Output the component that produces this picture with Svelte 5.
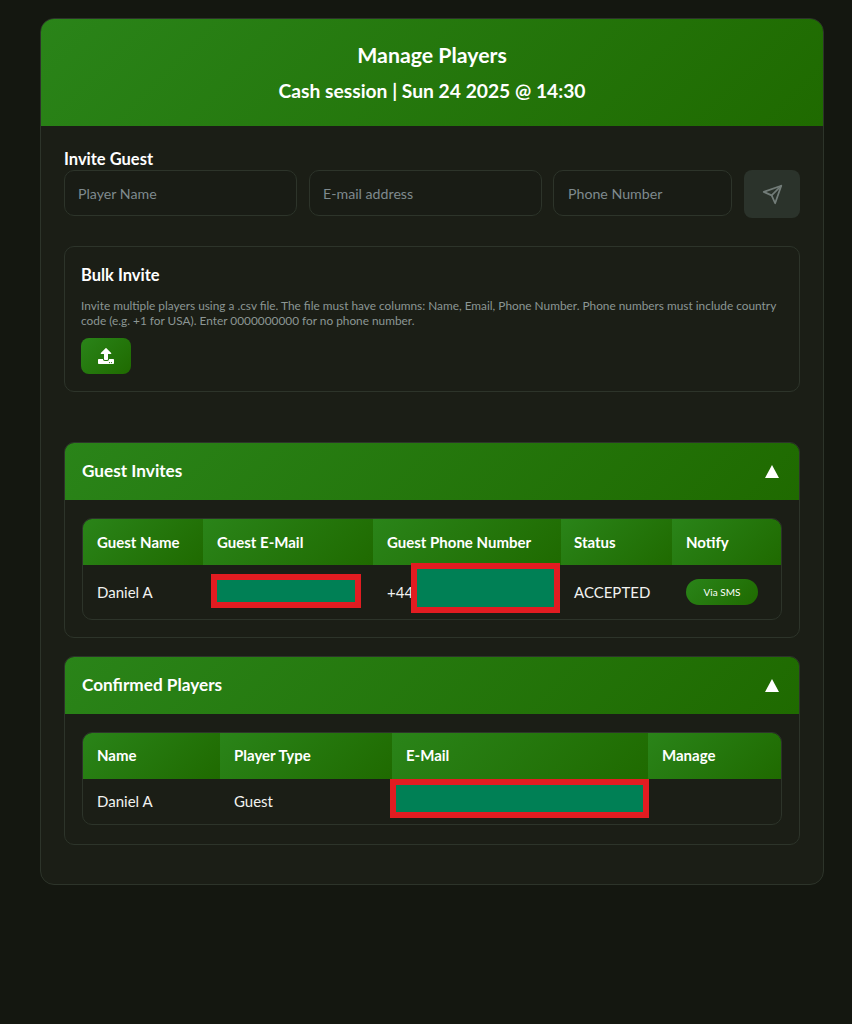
<script>
  const invites = [{ name: 'Daniel A', phone: '+44', status: 'ACCEPTED' }];
  const players = [{ name: 'Daniel A', type: 'Guest' }];
</script>

<div class="page">
  <main class="card">
    <header class="card-head">
      <h1>Manage Players</h1>
      <h2>Cash session | Sun 24 2025 @ 14:30</h2>
    </header>

    <div class="card-body">
      <section class="invite">
        <h3>Invite Guest</h3>
        <div class="invite-row">
          <input class="name" placeholder="Player Name" />
          <input class="email" placeholder="E-mail address" />
          <input class="phone" placeholder="Phone Number" />
          <button class="send" aria-label="Send invite">
            <svg viewBox="0 0 24 24" width="21" height="21" fill="none" stroke="currentColor" stroke-width="2" stroke-linecap="round" stroke-linejoin="round">
              <line x1="22" y1="2" x2="11" y2="13" />
              <polygon points="22 2 15 22 11 13 2 9 22 2" />
            </svg>
          </button>
        </div>
      </section>

      <section class="bulk">
        <h4>Bulk Invite</h4>
        <p>Invite multiple players using a .csv file. The file must have columns: Name, Email, Phone Number. Phone numbers must include country code (e.g. +1 for USA). Enter 0000000000 for no phone number.</p>
        <button class="upload" aria-label="Upload file">
          <svg viewBox="0 0 512 512" width="16" height="16" fill="currentColor">
            <path d="M296 384h-80c-13.3 0-24-10.7-24-24V192h-87.7c-17.8 0-26.7-21.5-14.1-34.1L242.3 5.7c7.5-7.5 19.8-7.5 27.3 0l152.2 152.2c12.6 12.6 3.7 34.1-14.1 34.1H320v168c0 13.3-10.7 24-24 24zm216-8v112c0 13.3-10.7 24-24 24H24c-13.3 0-24-10.7-24-24V376c0-13.3 10.7-24 24-24h136v8c0 30.9 25.1 56 56 56h80c30.9 0 56-25.1 56-56v-8h136c13.3 0 24 10.7 24 24zm-124 88c0-11-9-20-20-20s-20 9-20 20 9 20 20 20 20-9 20-20zm64 0c0-11-9-20-20-20s-20 9-20 20 9 20 20 20 20-9 20-20z" />
          </svg>
        </button>
      </section>

      <section class="panel guests">
        <div class="panel-head">
          <span>Guest Invites</span>
          <svg viewBox="0 0 14 13" width="14" height="13" fill="#fff"><polygon points="7 0 14 13 0 13" /></svg>
        </div>
        <div class="panel-body">
          <div class="table-wrap">
            <table>
              <colgroup>
                <col style="width:120px" />
                <col style="width:170px" />
                <col style="width:188px" />
                <col style="width:111px" />
                <col style="width:109px" />
              </colgroup>
              <thead>
                <tr>
                  <th>Guest Name</th>
                  <th>Guest E-Mail</th>
                  <th>Guest Phone Number</th>
                  <th class="status">Status</th>
                  <th>Notify</th>
                </tr>
              </thead>
              <tbody>
                {#each invites as row}
                  <tr>
                    <td>{row.name}</td>
                    <td class="hidden-cell"><span class="redact r-mail"></span></td>
                    <td class="hidden-cell">{row.phone}<span class="redact r-phone"></span></td>
                    <td class="status">{row.status}</td>
                    <td><button class="sms">Via SMS</button></td>
                  </tr>
                {/each}
              </tbody>
            </table>
          </div>
        </div>
      </section>

      <section class="panel confirmed">
        <div class="panel-head">
          <span>Confirmed Players</span>
          <svg viewBox="0 0 14 13" width="14" height="13" fill="#fff"><polygon points="7 0 14 13 0 13" /></svg>
        </div>
        <div class="panel-body">
          <div class="table-wrap">
            <table>
              <colgroup>
                <col style="width:137px" />
                <col style="width:172px" />
                <col style="width:256px" />
                <col style="width:133px" />
              </colgroup>
              <thead>
                <tr>
                  <th>Name</th>
                  <th>Player Type</th>
                  <th>E-Mail</th>
                  <th>Manage</th>
                </tr>
              </thead>
              <tbody>
                {#each players as row}
                  <tr>
                    <td>{row.name}</td>
                    <td>{row.type}</td>
                    <td class="hidden-cell"><span class="redact r-conf"></span></td>
                    <td></td>
                  </tr>
                {/each}
              </tbody>
            </table>
          </div>
        </div>
      </section>
    </div>
  </main>
</div>

<style>
  :global(body) {
    margin: 0;
    background: #141710;
  }

  .page {
    height: 1024px;
    padding: 18px 28px 0 40px;
    box-sizing: border-box;
    font-family: Lato, "Open Sans", sans-serif;
    color: #fff;
  }

  .card {
    height: 867px;
    box-sizing: border-box;
    background: #1b1e16;
    border: 1px solid #2d342a;
    border-radius: 14px;
    overflow: hidden;
  }

  .card-head {
    height: 108px;
    margin: -1px -1px 0;
    background: linear-gradient(135deg, #2a8419, #1f6a00);
    text-align: center;
    overflow: hidden;
  }

  h1 {
    margin: 23px 0 0;
    font-size: 21.3px;
    line-height: 28px;
    font-weight: 700;
  }

  h2 {
    margin: 8px 0 0;
    font-size: 19.25px;
    line-height: 28px;
    font-weight: 700;
  }

  .card-body {
    padding: 23px 23px 0;
  }

  h3 {
    margin: 0;
    font-size: 16.5px;
    line-height: 21px;
    font-weight: 700;
  }

  .invite-row {
    display: flex;
    gap: 12px;
    align-items: flex-start;
  }

  input {
    height: 46px;
    box-sizing: border-box;
    padding: 0 14px;
    background: #191c15;
    border: 1px solid #2d342a;
    border-radius: 10px;
    font: 14.2px Lato, sans-serif;
    color: #fff;
    outline: none;
  }

  input::placeholder {
    color: #7f8a8e;
    opacity: 1;
  }

  .name,
  .email {
    width: 233px;
    padding: 0 13px;
  }

  .phone {
    width: 179px;
  }

  .email {
    margin-right: -1px;
  }

  .send {
    width: 56px;
    height: 48px;
    display: flex;
    align-items: center;
    justify-content: center;
    padding: 0;
    border: 0;
    border-radius: 8px;
    background: #2b332b;
    color: #727c78;
  }

  .bulk {
    height: 146px;
    box-sizing: border-box;
    margin-top: 28px;
    padding: 17px 16px;
    border: 1px solid #2d342a;
    border-radius: 10px;
  }

  h4 {
    margin: 0;
    font-size: 16.5px;
    line-height: 22px;
    font-weight: 700;
  }

  .bulk p {
    margin: 12px 0 0;
    font-size: 11.85px;
    line-height: 15px;
    color: #8b9694;
  }

  .upload {
    width: 50px;
    height: 36px;
    margin-top: 10px;
    display: flex;
    align-items: center;
    justify-content: center;
    padding: 0;
    border: 0;
    border-radius: 8px;
    background: linear-gradient(135deg, #2a8419, #1f6a00);
    color: #fff;
  }

  .panel {
    border: 1px solid #2d342a;
    border-radius: 10px;
    overflow: hidden;
  }

  .guests {
    margin-top: 50px;
    height: 196px;
    box-sizing: border-box;
  }

  .confirmed {
    margin-top: 18px;
    height: 189px;
    box-sizing: border-box;
  }

  .panel-head {
    height: 58px;
    box-sizing: border-box;
    margin: -1px -1px 0;
    padding: 0 21px 2px 18px;
    display: flex;
    align-items: center;
    justify-content: space-between;
    background: linear-gradient(135deg, #2a8419, #1f6a00);
    font-size: 17.2px;
    font-weight: 700;
  }

  .panel-head svg {
    margin-top: 2px;
  }

  .panel-body {
    padding: 18px 17px 0;
  }

  .table-wrap {
    border: 1px solid #2d342a;
    border-radius: 10px;
    overflow: hidden;
  }

  table {
    width: 100%;
    table-layout: fixed;
    border-collapse: collapse;
    font-size: 15px;
  }

  th,
  td {
    box-sizing: border-box;
    padding: 0 14px;
  }

  th {
    height: 46px;
    text-align: left;
    font-weight: 700;
    background: linear-gradient(135deg, #2a8419, #1f6a00);
  }

  td {
    height: 54px;
    color: #f2f2f0;
  }

  th.status,
  td.status {
    padding-left: 13px;
  }

  .confirmed th,
  .confirmed td {
    padding-bottom: 2px;
  }

  .confirmed td {
    height: 45px;
  }

  .hidden-cell {
    position: relative;
  }

  .redact {
    position: absolute;
    box-sizing: border-box;
    background: #008055;
    border: 6px solid #e21c21;
  }

  .r-mail {
    left: 8px;
    top: 9px;
    width: 150px;
    height: 34px;
  }

  .r-phone {
    left: 38px;
    top: -2px;
    width: 149px;
    height: 50px;
  }

  .r-conf {
    left: -2px;
    top: 0;
    width: 259px;
    height: 39px;
  }

  .sms {
    width: 72px;
    height: 26px;
    display: block;
    padding: 0;
    border: 0;
    border-radius: 13px;
    background: linear-gradient(135deg, #2a8419, #1f6a00);
    color: #fff;
    font: 400 10px Lato, sans-serif;
  }
</style>
